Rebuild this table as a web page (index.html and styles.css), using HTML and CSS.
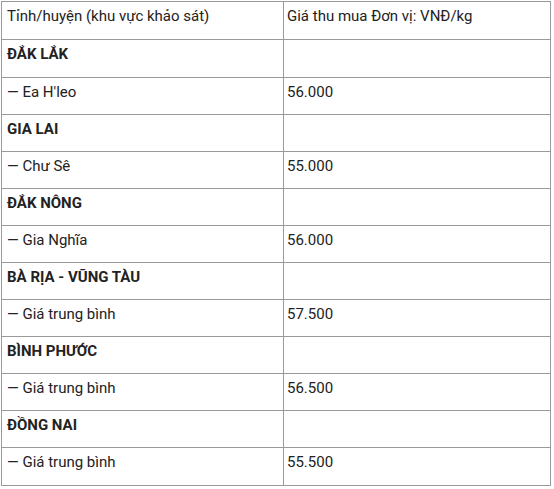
FILE: index.html
```html
<!DOCTYPE html>
<html lang="vi">
<head>
<meta charset="utf-8">
<title>Giá thu mua</title>
<link rel="stylesheet" href="styles.css">
</head>
<body>
<div class="wrap">
<table class="price-table">
  <tr class="head tall"><td class="c1">Tỉnh/huyện (khu vực khảo sát)</td><td class="c2">Giá thu mua Đơn vị: VNĐ/kg</td></tr>
  <tr class="tall"><td class="c1 prov">ĐẮK LẮK</td><td class="c2"></td></tr>
  <tr><td class="c1">— Ea H'leo</td><td class="c2">56.000</td></tr>
  <tr><td class="c1 prov">GIA LAI</td><td class="c2"></td></tr>
  <tr><td class="c1">— Chư Sê</td><td class="c2">55.000</td></tr>
  <tr><td class="c1 prov">ĐẮK NÔNG</td><td class="c2"></td></tr>
  <tr><td class="c1">— Gia Nghĩa</td><td class="c2">56.000</td></tr>
  <tr><td class="c1 prov">BÀ RỊA - VŨNG TÀU</td><td class="c2"></td></tr>
  <tr><td class="c1">— Giá trung bình</td><td class="c2">57.500</td></tr>
  <tr><td class="c1 prov">BÌNH PHƯỚC</td><td class="c2"></td></tr>
  <tr><td class="c1">— Giá trung bình</td><td class="c2">56.500</td></tr>
  <tr><td class="c1 prov">ĐỒNG NAI</td><td class="c2"></td></tr>
  <tr class="tall"><td class="c1">— Giá trung bình</td><td class="c2">55.500</td></tr>
</table>
</div>
</body>
</html>
```
FILE: styles.css
```css
html, body {
  margin: 0;
  padding: 0;
  background: #fff;
}
.wrap {
  padding: 1px 0 0 1px;
}
.price-table {
  border-collapse: separate;
  border-spacing: 0;
  border-top: 1px solid #9a9a9a;
  border-left: 1px solid #9a9a9a;
  width: 550px;
  table-layout: fixed;
  font-family: Roboto, "Liberation Sans", sans-serif;
  font-size: 15px;
  line-height: 20px;
  color: #222;
}
.price-table td {
  border-right: 1px solid #9a9a9a;
  border-bottom: 1px solid #9a9a9a;
  vertical-align: top;
  padding: 4px 4px 0 5px;
  height: 37px;
  box-sizing: border-box;
}
.price-table .tall td {
  height: 38px;
}
.price-table .c1 {
  width: 282px;
}
.price-table .c2 {
  width: 267px;
  padding-left: 3px;
}
.price-table .prov {
  font-weight: 700;
}
```
